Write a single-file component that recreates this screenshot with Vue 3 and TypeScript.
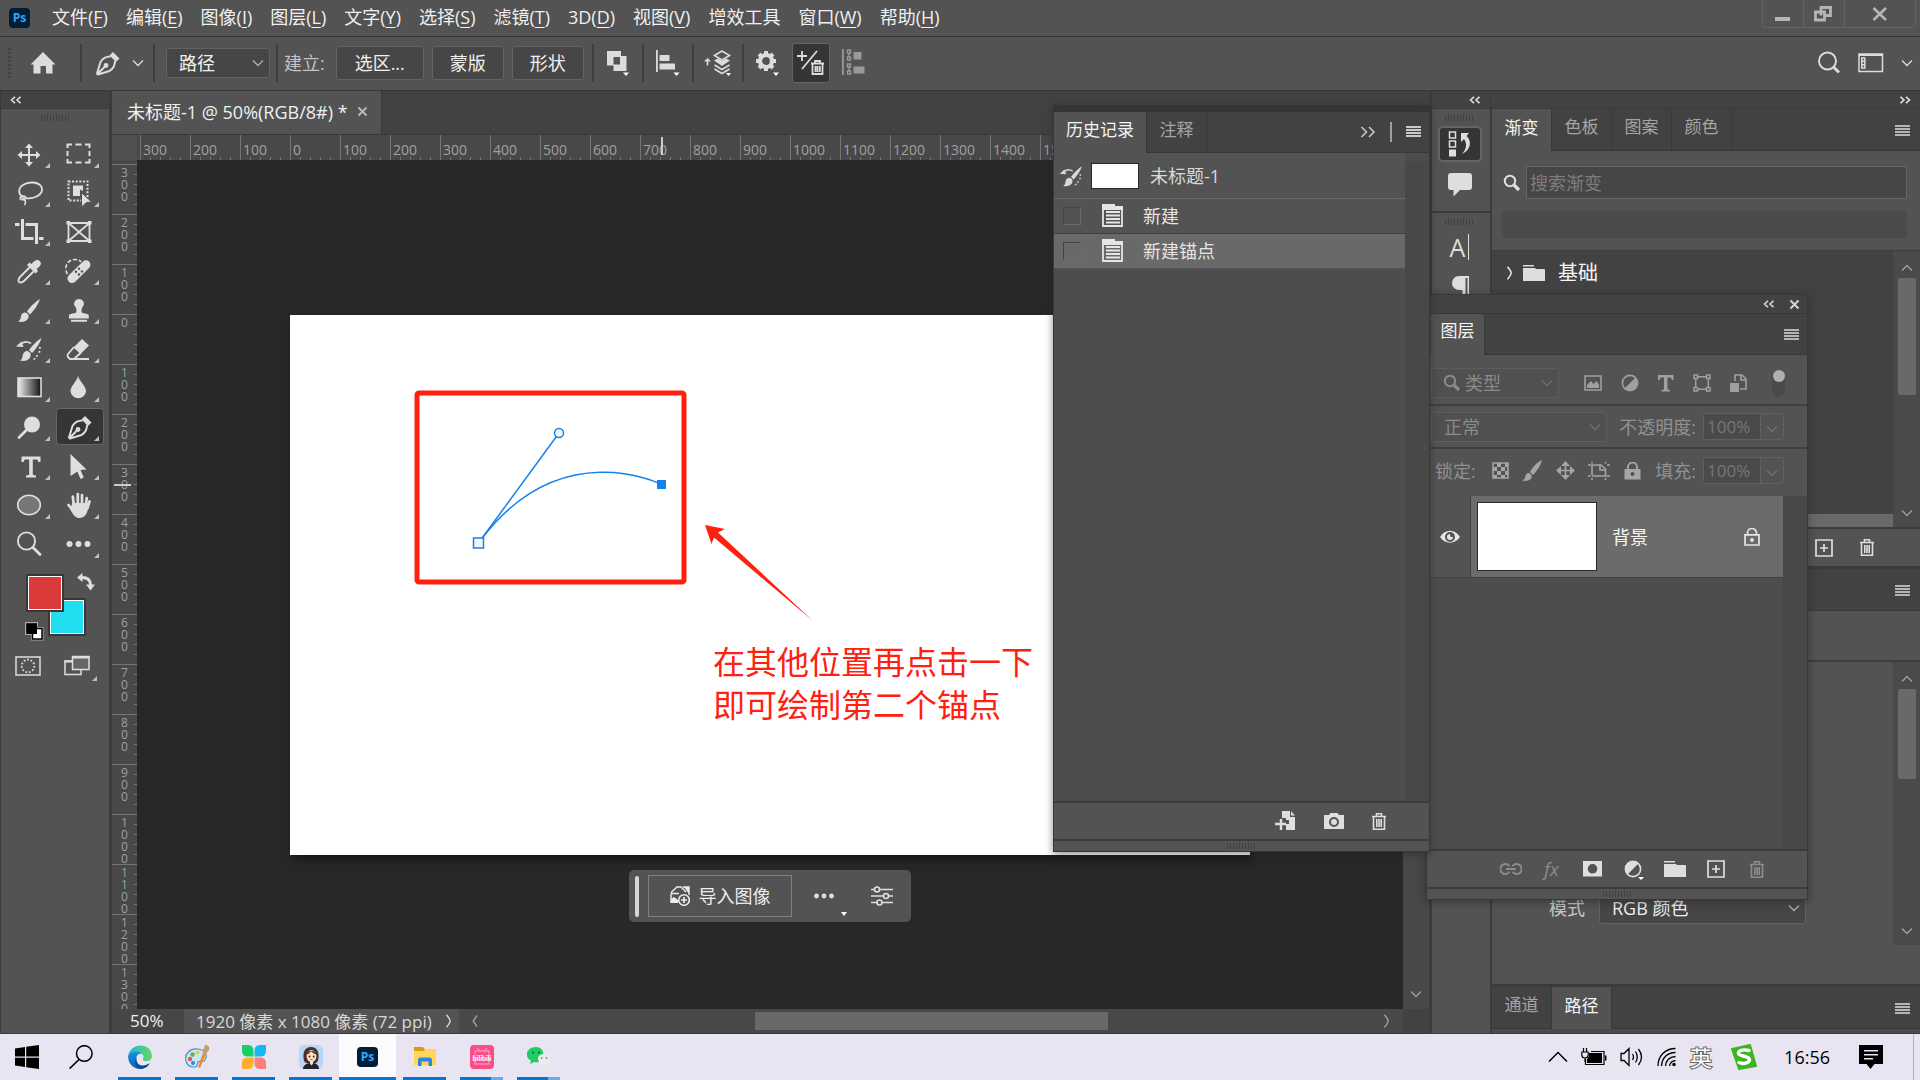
<script setup lang="ts">
import { h, ref } from 'vue'
import type { FunctionalComponent } from 'vue'

type IconDef = [number, number, string]

const S = 'fill="none" stroke="currentColor"'

const trash = `<path ${S} stroke-width="1.6" d="M1 4.5H15M5.5 4V1.8H10.500V4M2.500 5V17.200H13.500V5M5.800 7V15M8 7V15M10.200 7V15"/>`
const brushBody =
  '<path d="M26 4C22 6 16 12 13 16.500L16 19.500C20 15.500 24.500 9 26 4ZM11.500 17.500C8 17.500 7 20 6.800 22.500 6.500 24.500 5.500 25.500 4 26.500 8 27.500 12 26.500 13.800 24 15 22 15 20.500 14 19Z"/>'
const penBody = `<path ${S} stroke-width="2" stroke-linejoin="round" d="M19.500 8.500C15 8.500 11.500 10.500 9.500 14L6 25.500 7 26.500 18.500 23C22 21 24 17.500 24 13M6.500 26L14 18.500"/><circle cx="15" cy="17.500" r="2.400"/><path d="M18.500 7.500L22 4 28.500 10.500 25 14Z"/>`

const icons: Record<string, IconDef> = {
  move: [30, 30, `<path ${S} stroke-width="2" d="M15 7V25M6 16H24"/><path d="M15 4.500L19 9H11ZM15 27.500L19 23H11ZM3.500 16L8 12V20ZM26.500 16L22 12V20Z"/>`],
  marquee: [30, 30, `<path ${S} stroke-width="2" d="M4.500 9V5.500H9M12.500 5.500H18.500M22 5.500H26.500V9M26.500 12V17M26.500 20V23.500H22M18.500 23.500H12.500M9 23.500H4.500V20M4.500 17V12"/>`],
  lasso: [30, 30, `<path ${S} stroke-width="1.8" d="M8.500 18.500C4 16 4 10 9 7 14 3.500 23 3.500 27 8 30 13 26 18 20 19.500 17 20.400 13 20.500 10.500 19.800"/><path ${S} stroke-width="1.6" d="M12 19.500C11 17.500 6.500 17.800 6 20 6 22.500 11 22.500 12 19.500ZM7 19C10 20 13 23.500 10.500 27"/>`],
  object: [30, 30, `<path ${S} stroke-width="2" stroke-dasharray="2 1.6" d="M5.500 3.500H24.500V22.500H5.500Z"/><path d="M10 7.500H20V13L17 11.500V18H10Z"/><path stroke="#535353" d="M18.500 14.500L28.500 24 23.500 24.500 18.500 29Z"/>`],
  crop: [30, 30, `<path ${S} stroke-width="3" d="M8.500 2V21.500H19.500M1 7.500H5.500M11.500 7.500H22.500V27M25 21.500H29.500"/>`],
  frame: [30, 30, `<path ${S} stroke-width="1.800" d="M5.500 6H26.500V24H5.500ZM5.500 6L26.500 24M26.500 6L5.500 24"/><path d="M3.500 4H7V7.500H3.500ZM25 4H28.500V7.500H25ZM3.500 22.500H7V26H3.500ZM25 22.500H28.500V26H25Z"/>`],
  eyedropper: [30, 30, `<path d="M25.800 5C28 7.500 27 10 22.500 13L24 15 21.500 17.500 13 9 15.500 6.500 17.500 8C20 4.500 23 2.500 25.800 5Z"/><path ${S} stroke-width="1.900" d="M15.500 11.500L6.500 20.500C4.500 22.500 4 25 5 26 6.500 27 9 26 10.500 24.500L19.500 15.500"/>`],
  heal: [30, 30, `<path ${S} stroke-width="1.600" stroke-dasharray="4 2" d="M4.500 18C0 11 5 3.500 12 3.500 15 3.500 17 4.500 18 6"/><path d="M20 5.500C22 3.500 25 4 26.500 6 28 8 27.500 10.500 26 12L12.500 25.500C10 27.500 7.500 27.500 5.800 25.500 4 23.500 4 21 6 19Z"/><g fill="#535353"><circle cx="16" cy="12.800" r="1.200"/><circle cx="13" cy="15.800" r="1.200"/><circle cx="19" cy="15.500" r="1.200"/><circle cx="16" cy="18.500" r="1.200"/></g>`],
  brush: [30, 30, brushBody],
  stamp: [30, 30, '<path d="M16 4A4.700 4.700 0 0 1 19.500 12C18.500 13.500 18.300 16 18.800 17.500 21 19 25.800 18.500 25.800 20.500V23.500H6V20.500C6 18.500 11 19 13.200 17.500 13.700 16 13.500 13.500 12.500 12A4.700 4.700 0 0 1 16 4ZM8 24.700H24V26.700H8Z"/>'],
  historybrush: [30, 30, `<path d="M27.500 4C23.500 6 18 12 15 16L18 19C22 15 26 9 27.500 4ZM13.500 17C10 17 9 19.500 8.500 22.500 8.200 24.500 7.500 25.500 6 26.500 10 27.500 14 26.500 15.800 24 17 22 17 20 16 18.500ZM2 12.500L7.500 7.500 9.500 13Z"/><path ${S} stroke-width="1.600" d="M7 10C10 7.500 14 7.500 17 9.500"/><path d="M25 13H26.800V14.800H25ZM24.500 17H26.300V18.800H24.500ZM22 21H23.800V22.800H22ZM19.500 24H21.300V25.800H19.500Z"/>`],
  eraser: [30, 30, `<path ${S} stroke-width="1.800" stroke-linejoin="round" d="M11 13L5 20C4.200 21 4.300 22 5 23L7 25H11L18 18.500M7 25H26"/><path d="M10.500 13.500L19 5 26 11.500 17.500 20Z"/>`],
  gradient: [30, 30, '<defs><linearGradient id="toolGrad"><stop offset="0" stop-color="#eee"/><stop offset="1" stop-color="#111"/></linearGradient></defs><rect x="4" y="5" width="23" height="18.500" fill="url(#toolGrad)" stroke="#ddd" stroke-width="1.600"/>'],
  drop: [30, 30, '<path d="M15 3C17 9 23 13 23 18.500A7.800 7.500 0 0 1 7.500 18.500C7.500 13 13.500 9 15 3Z"/>'],
  dodge: [30, 30, `<circle cx="18" cy="12.500" r="8"/><path ${S} stroke-width="2.800" stroke-linecap="round" d="M12 18.500L5 25.500"/>`],
  pen: [30, 30, penBody],
  type: [30, 30, '<path d="M7.500 5.500H26.500V11H24.300C24 9 23.500 8.500 22 8.500H18.800V23C18.800 24 19.500 24.300 22 24.500V26.500H12V24.500C14.500 24.300 15.200 24 15.200 23V8.500H12C10.500 8.500 10 9 9.700 11H7.500Z"/>'],
  select: [30, 30, '<path d="M7.500 3L23.500 18.500 17.500 19 20.800 26.500 17.500 28 14.300 20.500 7.500 25Z"/>'],
  ellipse: [30, 30, '<ellipse cx="15" cy="15" rx="11.300" ry="9.700" fill="#777" stroke="#e0e0e0" stroke-width="1.600"/>'],
  hand: [30, 30, `<path ${S} stroke-width="2.700" stroke-linecap="round" d="M10.800 15L9.800 6.500M14.800 14V4M19 14V5M22.800 16L23.800 8M5.500 15L10 20.500M26.500 11.500L24.500 18"/><path d="M9.500 13H24.500L25 18C24.500 24 21 28 16.500 28 12.500 28 10.500 25.500 7 19Z"/>`],
  zoom: [30, 30, `<circle cx="12.500" cy="12" r="8.600" ${S} stroke-width="1.900"/><path ${S} stroke-width="2.800" stroke-linecap="round" d="M19 18.500L26 25.500"/>`],
  more: [30, 30, '<circle cx="6.500" cy="15" r="3"/><circle cx="15.500" cy="15" r="3"/><circle cx="24.500" cy="15" r="3"/>'],
  home: [26, 24, '<path d="M13 1L25.500 13.500H22.500V22.500H16V15H10.500V22.500H3.500V13.500H.5Z"/>'],
  chevron: [12, 8, `<path ${S} stroke-width="1.300" d="M1 1.500L6 6.500 11 1.500"/>`],
  chevup: [12, 8, `<path ${S} stroke-width="1.300" d="M1 6.500L6 1.500 11 6.500"/>`],
  right: [8, 14, `<path ${S} stroke-width="1.400" d="M1.500 .8Q5 5 5.200 7 5 9 1.500 13.200"/>`],
  left: [8, 14, `<path ${S} stroke-width="1.400" d="M6 1.500L2.200 7 6 12.500"/>`],
  dblleft: [12, 8, `<path ${S} stroke-width="1.600" d="M5 .8L1.500 4 5 7.200M10.500 .8L7 4 10.500 7.200"/>`],
  dblright: [12, 8, `<path ${S} stroke-width="1.600" d="M1.500 .8L5 4 1.500 7.200M7 .8L10.500 4 7 7.200"/>`],
  dblbig: [16, 12, `<path ${S} stroke-width="1.600" d="M1.500 1L6.500 6 1.500 11M9 1L14 6 9 11"/>`],
  menu: [16, 12, '<path d="M0 0H15V2H0ZM0 3H15V5H0ZM0 6H15V8H0ZM0 9H15V11H0Z"/>'],
  combine: [24, 26, '<path fill-rule="evenodd" d="M1 1H15V6H20.500V21H7.500V15.500H1ZM7.500 7V14.500H14V7Z"/><path fill="#fff" d="M17 22.500H23L20 26Z"/>'],
  align: [24, 26, '<path d="M0 0H1.800V22H0ZM3.500 5H13.500V11H3.500ZM3.500 13.500H19V19.500H3.500Z"/><path fill="#fff" d="M17.500 22.500H23.500L20.500 26Z"/>'],
  arrange: [28, 26, `<path ${S} stroke-width="1.600" d="M18 1L25.500 5.500 18 10 10.500 5.500ZM10.500 15L18 19.500 25.500 15M10.500 19L18 23.500 25.500 19M3.500 15.500V10"/><path d="M10 10.500L14 8.500 18 11 22 8.500 26 10.500 18 16ZM0 11.500L3.500 8 7 11.500Z"/><path fill="#fff" d="M22 23H27L24.500 26Z"/>`],
  gear: [24, 26, `<circle cx="10" cy="11" r="6" ${S} stroke-width="4.200"/><path ${S} stroke-width="4" d="M10 1V4M10 18V21M0 11H3M17 11H20M3 4L5 6M17 4L15 6M3 18L5 16M17 18L15 16"/><path fill="#fff" d="M17 22.500H23L20 26Z"/>`],
  autoadd: [28, 26, `<path ${S} stroke-width="1.800" d="M0 6H10M5 1V11M5 19L20 1M14 13.500H27M18 13V11H23V13M15.500 14V24H25.500V14M18.500 16V22M20.500 16V22M22.800 16V22"/>`],
  edges: [24, 28, `<path d="M0 0H1.800V26H0ZM11.500 3H19.500V10.500H11.500ZM11.500 17.500H22.500V24.500H11.500Z"/><path ${S} stroke-width="1.400" d="M5.500 1H8.500V4H5.500ZM5.500 8H8.500V11H5.500ZM5.500 15H8.500V18H5.500ZM5.500 22H8.500V25H5.500ZM7 4V8M7 18V22"/>`],
  find: [24, 24, `<circle cx="10.500" cy="10" r="8.500" ${S} stroke-width="1.900"/><path ${S} stroke-width="3" d="M16.500 16L22 21.500"/>`],
  smallfind: [18, 18, `<circle cx="7" cy="7" r="5.200" ${S} stroke-width="2"/><path ${S} stroke-width="3.200" d="M11 11L16 16"/>`],
  workspace: [26, 20, `<path ${S} stroke-width="1.500" d="M1 1H24.500V18.500H1ZM3.800 5H6.800V15H3.800ZM3.800 8.300H6.800M3.800 11.700H6.800"/><path d="M1 1H24.500V3H1Z"/>`],
  minimize: [16, 16, '<path d="M0 11H15V15H0Z"/>'],
  restore: [20, 16, `<path ${S} stroke-width="2.800" d="M7 9.500V1.500H16.500V9.500H11M1.500 6H10.500V14H1.500Z"/>`],
  close: [16, 14, `<path ${S} stroke-width="2.600" d="M1.500 1L14 13M14 1L1.500 13"/>`],
  smallclose: [11, 11, `<path ${S} stroke-width="2" d="M1.500 1.500L9.500 9.500M9.500 1.500L1.500 9.500"/>`],
  historydock: [24, 28, `<path ${S} stroke-width="1.500" d="M1.500 2H7.500V8H1.500ZM1.500 11H7.500V17H1.500Z"/><path d="M1 19.500H8V26.500H1ZM13 3H21L18.500 6C24 11 23 20 14 24 19 19 19 13 16 9L13 12Z"/>`],
  comment: [24, 24, '<path d="M3 0H21Q24 0 24 3V14Q24 17 21 17H12L5.500 23.500V17H3Q0 17 0 14V3Q0 0 3 0Z"/>'],
  para: [18, 24, '<path d="M8 0H18V24H16.500V2H14.500V24H11.500V14H8A7 7 0 0 1 8 0Z"/>'],
  folder: [22, 18, '<path d="M0 1H11V2.500H0ZM0 4H12L13 5H21Q22 5 22 6V17H0Z"/>'],
  plus: [18, 18, `<path ${S} stroke-width="1.700" d="M1 1H17V17H1ZM9 5V13M5 9H13"/>`],
  trash: [16, 19, trash],
  docstate: [22, 24, `<path ${S} stroke-width="1.800" d="M1 3H20V22H1ZM4 8H18M4 11.500H18M4 15H18M4 18.500H18"/><path d="M0 0H13V2H21V6H0Z"/>`],
  newdoc: [22, 22, `<path d="M7 4V1H15V7H20V20H11V14H14V10H11V8H7ZM16 1L20 5.500H16Z"/><path ${S} stroke-width="2.400" d="M0 14H11M6 9V20"/>`],
  camera: [20, 18, '<path fill-rule="evenodd" d="M0 3H5L6.500 1H13.500L15 3H20V17H0ZM10 5A5 5 0 0 0 10 15 5 5 0 0 0 10 5ZM10 7A3 3 0 0 1 10 13 3 3 0 0 1 10 7Z"/>'],
  picture: [18, 16, `<path ${S} stroke-width="1.600" d="M1 1H17V15H1Z"/><path d="M3 13V10L7 6 9.500 9 12.500 6 15 10V13Z"/>`],
  adjust: [18, 18, `<circle cx="9" cy="9" r="7.600" ${S} stroke-width="1.600"/><path d="M14.500 3.500L3.500 14.500A7.800 7.800 0 0 0 14.500 3.500Z"/>`],
  adjustfull: [20, 22, '<circle cx="9" cy="11" r="7.600" fill="none" stroke="currentColor" stroke-width="1.600"/><path d="M14.500 5.500L3.500 16.500A7.800 7.800 0 0 1 3.500 5.500 7.800 7.800 0 0 1 14.500 5.500Z"/><path fill="#fff" d="M14 19H20L17 22Z"/>'],
  smallT: [16, 17, '<path d="M0 0H15.500V5H13.800C13.500 3 13 2.600 11.500 2.600H9.500V13.500C9.500 14.500 10 14.800 12 15V16.500H3.500V15C5.500 14.800 6 14.500 6 13.500V2.600H4C2.500 2.600 2 3 1.700 5H0Z"/>'],
  shape: [18, 18, `<path ${S} stroke-width="1.500" d="M1 1H4.500V4.500H1ZM13.500 1H17V4.500H13.500ZM1 13.500H4.500V17H1ZM13.500 13.500H17V17H13.500ZM4.500 2.700H13.500M4.500 15.300H13.500M2.700 4.500V13.500M15.300 4.500V13.500"/>`],
  smart: [17, 18, `<path ${S} stroke-width="1.600" d="M5 7V1H12L16 5V15H10M11 1V6H16"/><path d="M0 9H9V18H0Z"/>`],
  checker: [17, 17, `<path ${S} stroke-width="1.600" d="M1 1H16V16H1Z"/><path d="M5 1H9V5H5ZM13 1H16V5H13ZM1 5H5V9H1ZM9 5H13V9H9ZM5 9H9V13H5ZM13 9H16V13H13ZM1 13H5V16H1ZM9 13H13V16H9Z"/>`],
  smallbrush: [20, 21, '<path d="M20 0C15 2 10 8 8 12L11 15C15 11 19 5 20 0ZM7 13C4 13 3.500 15.500 3 17.500 2.500 19 1.500 20 0 20.500 4 21.500 8 20.500 9.500 18 10.200 16.500 10 15 7 13Z"/>'],
  smallmove: [19, 19, `<path ${S} stroke-width="1.700" d="M9.500 2V17M2 9.500H17"/><path d="M9.500 0L14 5H5ZM9.500 19L14 14H5ZM0 9.500L5 5V14ZM19 9.500L14 5V14Z"/>`],
  artboard: [22, 18, `<path ${S} stroke-width="1.600" d="M0 3H3M4 13V3H13L17.500 7V14H4M18.500 14H22M4 16V18M17.500 16V18M4 0V1.500M17.500 0V1.500M19 3H22M0 14H3M12 3V8H17"/>`],
  lockfull: [17, 18, `<path ${S} stroke-width="1.900" d="M4 7V5A4.500 4.500 0 0 1 13 5V7"/><path fill-rule="evenodd" d="M.5 7H16.500V17.500H.5ZM8.500 10A2 2 0 0 0 8.500 14 2 2 0 0 0 8.500 10Z"/>`],
  lock: [16, 18, `<path ${S} stroke-width="1.700" d="M3.500 6.500V5A4.500 4.500 0 0 1 12.500 5V6.500M1 6.800H15V17H1Z"/><circle cx="8" cy="12" r="1.900"/>`],
  eye: [20, 14, '<path fill-rule="evenodd" d="M0 7C5-1.500 15-1.500 20 7 15 14.500 5 14.500 0 7ZM10 2A5 5 0 0 0 10 12 5 5 0 0 0 10 2Z"/><path d="M10 4A3 3 0 0 0 10 10 3 3 0 0 0 13 7L10.500 7Z"/>'],
  link: [22, 14, `<path ${S} stroke-width="2" d="M9.500 4.200A5 5 0 1 0 9.500 9.800M12.500 4.200A5 5 0 1 1 12.500 9.800M6 7H16"/>`],
  mask: [20, 16, '<path fill-rule="evenodd" d="M0 0H19V15.500H0ZM9.500 3A4.800 4.800 0 0 0 9.500 12.600 4.800 4.800 0 0 0 9.500 3Z"/>'],
  swap: [18, 18, `<path ${S} stroke-width="2.800" d="M5 4.500C11 4.500 13.500 7 13.500 12"/><path d="M0 4.500L5.500 0V9ZM13.500 17.500L9 11.500H18Z"/>`],
  defaults: [19, 19, '<path fill="#aaa" d="M0 0H13V5H18.500V18.500H6V13H0Z"/><path d="M7.500 6.500H17V17H7.500Z" fill="#fff" stroke="#000" stroke-width="1.500"/><path fill="#000" d="M1.200 1.200H12V12H1.200Z"/>'],
  quickmask: [26, 20, `<path ${S} stroke-width="1.500" d="M1 1H25V19H1Z"/><circle cx="13" cy="10" r="6.300" ${S} stroke-width="1.800" stroke-dasharray="1.700 1.800"/>`],
  screen: [28, 22, `<path ${S} stroke-width="1.500" d="M9 6H2V19.500H18V15"/><path d="M1.500 5.500H9V7.500H1.500Z"/><path fill="#666" stroke="currentColor" stroke-width="1.500" d="M9.500 1.500H26V14.500H9.500Z"/><path d="M9 1H26.500V3.500H9Z"/>`],
  importimg: [20, 20, `<path ${S} stroke-width="1.400" d="M1 6.500L7 1H11L16 6M13 1H19V9M1 7.500H9M1 7.500V17"/><path d="M1 17V13L4 11 8 14V17ZM14 1H19V8Z"/><circle cx="14" cy="14" r="5.300" fill="#535353" stroke="currentColor" stroke-width="1.600"/><path ${S} stroke-width="1.700" d="M11 14H17M14 11V17"/>`],
  dots: [20, 6, '<circle cx="2.500" cy="3" r="2.400"/><circle cx="10" cy="3" r="2.400"/><circle cx="17.500" cy="3" r="2.400"/>'],
  sliders: [22, 22, `<path ${S} stroke-width="1.500" d="M0 4.500H3.500M8.500 4.500H22M0 11H12.500M17.500 11H22M0 17.500H6M11 17.500H22"/><g ${S} stroke-width="1.600"><circle cx="6" cy="4.500" r="2.500"/><circle cx="15" cy="11" r="2.500"/><circle cx="8.500" cy="17.500" r="2.500"/></g>`],
  windows: [24, 24, '<path d="M0 3.500L10 2V11.500H0ZM11.200 1.800L24 0V11.500H11.200ZM0 12.700H10V22L0 20.500ZM11.200 12.700H24V24L11.200 22.200Z"/>'],
  tasksearch: [24, 24, `<circle cx="15.300" cy="8.500" r="7.800" ${S} stroke-width="1.500"/><path ${S} stroke-width="1.700" d="M10 14.500L.6 23.500"/>`],
  edge: [24, 24, '<defs><linearGradient id="eg1" x1="0" x2="1"><stop offset="0" stop-color="#27b4e8"/><stop offset="1" stop-color="#62d95a"/></linearGradient><linearGradient id="eg2" x1="0" y1="0" x2="0" y2="1"><stop offset="0" stop-color="#1597d8"/><stop offset="1" stop-color="#0a5fb5"/></linearGradient></defs><path fill="url(#eg1)" d="M.2 11C1.500-2 23-4 24 11 24 16 19 17 15.500 15.500 14 14 16 13.500 15.500 11 14 7 5 5 .2 11Z"/><path fill="url(#eg2)" d="M.2 11C2 6 10 5 14 9 9 8 7 13 9 17 11 22 17 22 21 19 18 24 12 25 7.500 23 2 20 0 16 .2 11Z"/><path fill="#124f91" d="M9 12C6 19 14 23.500 22 18 19 24 12 25.500 8.500 21.500 6.500 18.500 7 14 9 12Z"/>'],
  paint: [26, 24, '<path fill="#c9e6f7" stroke="#4c93c4" stroke-width="1.200" d="M2 16C0 9 6 3 14 4 21 5 24 10 21 15 19 18 16 15 14 17 12 20 15 22 10 22 6 22 3 20 2 16Z"/><circle cx="6" cy="14" r="2.200" fill="#e35b4f"/><circle cx="8.500" cy="9.500" r="2.200" fill="#6ab04c"/><circle cx="13.500" cy="7.500" r="2.100" fill="#f5c542"/><circle cx="9" cy="18" r="2" fill="#3d7fd0"/><path fill="#f08a24" d="M19 8L22 9 16 23 14 22Z"/><path fill="#c89c6c" d="M19 8C18 4 20 4 21 0 25 0 26 3 25 5L22 9Z"/>'],
  clover: [24, 24, '<path fill="#18cf67" d="M0 0H6Q11.500 0 11.500 6V11.500H6Q0 11.500 0 6Z"/><path fill="#19b6f4" d="M24 0V6Q24 11.500 18 11.500H12.500V6Q12.500 0 18 0Z"/><path fill="#ffad2e" d="M0 24V18Q0 12.500 6 12.500H11.500V18Q11.500 24 6 24Z"/><path fill="#ff7f7a" d="M24 24H18Q12.500 24 12.500 18V12.500H18Q24 12.500 24 18Z"/>'],
  avatar: [24, 24, '<rect width="24" height="24" rx="5" fill="#b5d8f7"/><path fill="#4a3028" d="M5 16C3 7 6 2 12 2 18 2 21 7 19 16L17 18H7Z"/><ellipse cx="12.500" cy="11" rx="5" ry="6" fill="#fbdcca"/><path fill="#4a3028" d="M7 10C8 5 16 4 18 10 15 9 13 7 12 6 11 8 9 9 7 10Z"/><path fill="#1f2128" d="M4 24C4 20 8 18.500 10.500 18L12.500 20 14.500 18C17 18.500 20 20 20 24Z"/><path fill="#fbdcca" d="M11 16H14V18.500L12.500 20.500 11 18.500Z"/><circle cx="10.500" cy="11.500" r=".9" fill="#222"/><circle cx="14.700" cy="11.500" r=".9" fill="#222"/><path stroke="#d05050" d="M11.500 14.500H13.500"/>'],
  explorer: [22, 20, '<path fill="#dc9a12" d="M0 0H9L11 2.500V6H0Z"/><path fill="#ffd55c" d="M0 4H10L11.500 2H22V18H0Z"/><path fill="#2f86d8" d="M4 19V13Q4 10.500 6.500 10.500H15.500Q18 10.500 18 13V19H14.500V14.500H7.500V19Z"/>'],
  bilibili: [24, 24, '<rect width="24" height="24" rx="4" fill="#fb4c86"/><path fill="none" stroke="#ff8fb4" stroke-width="1.500" d="M7 3L10 6M17 3L14 6M5 6H19V19H5Z"/><text x="12" y="16" text-anchor="middle" font-family="Lato, sans-serif" font-weight="900" font-size="7" fill="#fff">bilibili</text>'],
  wechat: [24, 22, '<path fill="#1fcb63" d="M9 1C-1 1-3 11 4 14.500L3 18 7 16C9 16.500 11 16.400 12 16 19 14 18 1 9 1Z"/><path fill="#ececec" d="M17 8C10 8 9 15 14 17.500 16 18.500 18 18.500 19.500 18L22.500 19.500 22 17C26 13 23 8 17 8Z"/><g fill="#0b6c34"><circle cx="6" cy="6.500" r="1.100"/><circle cx="12" cy="6.500" r="1.100"/></g><g fill="#888"><circle cx="14.700" cy="12" r=".9"/><circle cx="19.500" cy="12" r=".9"/></g>'],
  trayup: [20, 12, `<path ${S} stroke-width="1.500" d="M1 10.500L10 1.500 19 10.500"/>`],
  battery: [26, 18, `<path d="M8 5H21V15H6V11Q8 10 8 5ZM24 7.500H25.500V12.500H24Z"/><path ${S} stroke-width="1.200" d="M10 3.500H23V16.500H4.500V11M2.500 0V4M5.500 0V4M.8 4H7.200V7Q7 10 4 10 1 10 .8 7ZM4 10V14"/>`],
  speaker: [24, 20, `<path ${S} stroke-width="1.300" d="M1 6.500H4L9 1.500V18.500L4 13.500H1ZM12.500 7Q14.500 10 12.500 13M15.500 4.500Q19 10 15.500 15.500M18.500 2Q24.500 10 18.500 18"/>`],
  wifi: [20, 20, `<path ${S} stroke-width="1.300" d="M1 19C1 9 8 1.500 18.500 1.500M4.500 19C5 11 10 5.500 18.500 5.500M8.500 19C9 13.500 12 10 18.500 9.500M12.500 19C13 16 14.500 14 18.500 13.500"/><circle cx="17" cy="17.500" r="1.700"/>`],
  sogou: [26, 26, '<path fill="#3cb51f" d="M1 5L19 1 25 22 8 25Z" stroke="#3cb51f" stroke-width="2" stroke-linejoin="round"/><path fill="none" stroke="#fff" stroke-width="3.400" stroke-linecap="round" d="M18 6.500C12 5 7 6.500 7.500 9.500 8 12.500 18 11.500 18.500 15.500 18.500 19 12 20.500 8 18.500"/>'],
  notify: [24, 24, '<path fill-rule="evenodd" d="M0 0H24V19H15.500L11.500 24 7.500 19H0ZM5 5V6.400H19V5ZM5 9V10.400H19V9ZM5 13V14.400H14V13Z"/>'],
}

const Icon: FunctionalComponent<{ name: string }> = (props) => {
  const [w, ht, body] = icons[props.name]
  return h('svg', { width: w, height: ht, viewBox: `0 0 ${w} ${ht}`, fill: 'currentColor', 'aria-hidden': 'true', innerHTML: body })
}
Icon.props = ['name']

const menus: [string, string][] = [
  ['文件', 'F'], ['编辑', 'E'], ['图像', 'I'], ['图层', 'L'], ['文字', 'Y'], ['选择', 'S'],
  ['滤镜', 'T'], ['3D', 'D'], ['视图', 'V'], ['增效工具', ''], ['窗口', 'W'], ['帮助', 'H'],
]
const tools = [
  'move', 'marquee', 'lasso', 'object', 'crop', 'frame', 'eyedropper', 'heal', 'brush', 'stamp',
  'historybrush', 'eraser', 'gradient', 'drop', 'dodge', 'pen', 'type', 'select', 'ellipse', 'hand', 'zoom', 'more',
]
const noFlyout = ['frame', 'zoom']
const activeTool = ref('pen')

const hRuler = Array.from({ length: 26 }, (_, i) => Math.abs(i * 100 - 300))
const vRuler = Array.from({ length: 17 }, (_, i) => String(Math.abs(i * 100 - 300)).split(''))

const states = ['新建', '新建锚点']
const currentState = ref(1)
const swatchTabs = ['渐变', '色板', '图案', '颜色']
const filters = ['picture', 'adjust', 'smallT', 'shape', 'smart']
const locks = ['checker', 'smallbrush', 'smallmove', 'artboard', 'lockfull']

const apps: { icon: string; more?: boolean }[] = [
  { icon: 'edge' }, { icon: 'paint' }, { icon: 'clover' }, { icon: 'avatar' }, { icon: 'ps' },
  { icon: 'explorer' }, { icon: 'bilibili', more: true }, { icon: 'wechat', more: true },
]
</script>

<template>
  <div class="app">
    <header class="titlebar">
      <span class="ps-logo">Ps</span>
      <nav class="menus">
        <button v-for="[label, key] in menus" :key="label" class="menu">{{ label }}<template v-if="key">(<u>{{ key }}</u>)</template></button>
      </nav>
      <div class="window-buttons">
        <button aria-label="最小化"><Icon name="minimize" /></button>
        <button aria-label="还原"><Icon name="restore" /></button>
        <button class="wide" aria-label="关闭"><Icon name="close" /></button>
      </div>
    </header>

    <div class="options">
      <i class="vgrip"></i>
      <button class="home" aria-label="主页"><Icon name="home" /></button>
      <i class="sep"></i>
      <button class="tool-preset" aria-label="钢笔工具"><Icon name="pen" /><Icon name="chevron" /></button>
      <i class="sep"></i>
      <span class="dropdown mode-pick">
        <select aria-label="工具模式"><option>路径</option></select><Icon name="chevron" />
      </span>
      <i class="sep"></i>
      <span class="make">建立:</span>
      <button class="push wide">选区...</button>
      <button class="push">蒙版</button>
      <button class="push">形状</button>
      <i class="sep"></i>
      <button class="opt" aria-label="路径操作"><Icon name="combine" /></button>
      <i class="sep"></i>
      <button class="opt" aria-label="路径对齐方式"><Icon name="align" /></button>
      <i class="sep"></i>
      <button class="opt" aria-label="路径排列方式"><Icon name="arrange" /></button>
      <i class="sep"></i>
      <button class="opt" aria-label="其他选项"><Icon name="gear" /></button>
      <button class="opt pressed" aria-label="自动添加/删除"><Icon name="autoadd" /></button>
      <button class="opt off" aria-label="对齐边缘"><Icon name="edges" /></button>
      <div class="options-end">
        <button aria-label="搜索"><Icon name="find" /></button>
        <button aria-label="工作区"><Icon name="workspace" /></button>
        <button aria-label="选择工作区"><Icon name="chevron" /></button>
      </div>
    </div>

    <main class="workspace">
      <aside class="toolbar">
        <div class="dock-head"><Icon name="dblleft" /></div>
        <div class="toolbar-body">
          <i class="grip"></i>
          <div class="tools">
            <button v-for="t in tools" :key="t" class="tool" :class="{ active: t === activeTool, fly: !noFlyout.includes(t) }" :aria-label="t" @click="activeTool = t"><Icon :name="t" /></button>
          </div>
          <div class="swatches">
            <button class="swatch back" aria-label="背景色"></button>
            <button class="swatch front" aria-label="前景色"></button>
            <button class="swap" aria-label="切换颜色"><Icon name="swap" /></button>
            <button class="defaults" aria-label="默认颜色"><Icon name="defaults" /></button>
          </div>
          <div class="modes">
            <button aria-label="快速蒙版"><Icon name="quickmask" /></button>
            <button class="fly" aria-label="屏幕模式"><Icon name="screen" /></button>
          </div>
        </div>
      </aside>

      <section class="document">
        <div class="doc-tabs">
          <div class="doc-tab">未标题-1 @ 50%(RGB/8#) *<button aria-label="关闭文档"><Icon name="smallclose" /></button></div>
        </div>
        <div class="hruler-row">
          <div class="ruler-corner"></div>
          <div class="hruler">
            <span v-for="(n, i) in hRuler" :key="i">{{ n }}</span>
            <i class="hmark"></i>
          </div>
        </div>
        <div class="doc-body">
          <div class="vruler">
            <div v-for="(n, i) in vRuler" :key="i" class="vcell"><span v-for="(d, j) in n" :key="j">{{ d }}</span></div>
            <i class="vmark"></i>
          </div>
          <div class="stage">
            <div class="page">
              <svg class="drawing" width="960" height="540" viewBox="0 0 960 540">
                <rect x="127" y="78" width="267" height="189" rx="2" fill="none" stroke="#ff2010" stroke-width="5" />
                <path d="M415 210L435 214 428 217.500 523 306 424 222.500 421.500 229Z" fill="#ff2010" />
                <g fill="none" stroke="#1482ee" stroke-width="1.500">
                  <path d="M188.500 228L269 118" />
                  <path d="M188.500 228C269 118 371 169 371.500 169.500" />
                  <circle cx="269" cy="118" r="4.500" fill="#f6f6f6" />
                  <path d="M183.500 223H193.500V233H183.500Z" fill="#f6f6f6" />
                </g>
                <path d="M367 165H376V174H367Z" fill="#1482ee" />
              </svg>
              <p class="note">在其他位置再点击一下<br />即可绘制第二个锚点</p>
            </div>
            <div class="context-bar">
              <i class="handle"></i>
              <button class="import"><Icon name="importimg" />导入图像</button>
              <button class="ctx-more" aria-label="更多"><Icon name="dots" /></button>
              <button aria-label="属性"><Icon name="sliders" /></button>
            </div>
          </div>
          <div class="vscroll"><Icon name="chevron" /></div>
        </div>
        <footer class="status">
          <span class="zoom-level">50%</span>
          <span class="doc-info">1920 像素 x 1080 像素 (72 ppi)<Icon name="right" /></span>
          <div class="hscroll"><Icon name="left" /><i class="hthumb"></i><Icon name="right" /></div>
        </footer>
      </section>

      <aside class="icon-dock">
        <div class="dock-head end"><Icon name="dblleft" /></div>
        <div class="icon-group">
          <i class="grip"></i>
          <button class="pressed" aria-label="历史记录"><Icon name="historydock" /></button>
          <button aria-label="注释"><Icon name="comment" /></button>
        </div>
        <div class="icon-group last">
          <i class="grip"></i>
          <button class="char" aria-label="字符">A<i></i></button>
          <button aria-label="段落"><Icon name="para" /></button>
        </div>
      </aside>

      <aside class="panels">
        <div class="dock-head end"><Icon name="dblright" /></div>
        <section class="gradients">
          <div class="tabs">
            <button v-for="(t, i) in swatchTabs" :key="t" class="tab" :class="{ on: i === 0 }">{{ t }}</button>
            <button class="panel-menu" aria-label="面板菜单"><Icon name="menu" /></button>
          </div>
          <label class="search"><Icon name="smallfind" /><input type="text" placeholder="搜索渐变" /></label>
          <div class="recent"></div>
          <div class="preset-area">
            <div class="preset-list">
              <button class="preset-folder"><Icon name="right" /><Icon name="folder" />基础</button>
            </div>
            <div class="track"><Icon name="chevup" /><i class="thumb"></i><Icon name="chevron" /></div>
          </div>
          <div class="panel-foot">
            <button aria-label="新建渐变"><Icon name="plus" /></button>
            <button aria-label="删除渐变"><Icon name="trash" /></button>
          </div>
        </section>
        <section class="properties">
          <div class="tabs"><button class="panel-menu" aria-label="面板菜单"><Icon name="menu" /></button></div>
          <div class="prop-title"></div>
          <div class="prop-area">
            <div class="prop-body">
              <label for="mode">模式</label>
              <span class="dropdown"><select id="mode"><option>RGB 颜色</option></select><Icon name="chevron" /></span>
            </div>
            <div class="track"><Icon name="chevup" /><i class="thumb short"></i><Icon name="chevron" /></div>
          </div>
        </section>
        <section class="bottom-tabs">
          <div class="tabs">
            <button class="tab">通道</button>
            <button class="tab on">路径</button>
            <button class="panel-menu" aria-label="面板菜单"><Icon name="menu" /></button>
          </div>
        </section>
      </aside>

      <section class="floating layers">
        <div class="float-head"><Icon name="dblleft" /><Icon name="smallclose" /></div>
        <div class="tabs">
          <button class="tab on">图层</button>
          <button class="panel-menu" aria-label="面板菜单"><Icon name="menu" /></button>
        </div>
        <div class="layer-row filter-row">
          <span class="dropdown kind"><Icon name="smallfind" /><select aria-label="图层类型" disabled><option>类型</option></select><Icon name="chevron" /></span>
          <div class="filter-icons"><button v-for="f in filters" :key="f" :aria-label="f"><Icon :name="f" /></button></div>
          <button class="toggle" aria-label="过滤开关"><i></i></button>
        </div>
        <div class="layer-row">
          <span class="dropdown blend"><select aria-label="混合模式" disabled><option>正常</option></select><Icon name="chevron" /></span>
          <label class="amount">不透明度:<span class="number"><input value="100%" disabled /><Icon name="chevron" /></span></label>
        </div>
        <div class="layer-row lock-row">
          <span>锁定:</span>
          <div class="lock-icons"><button v-for="l in locks" :key="l" :aria-label="l"><Icon :name="l" /></button></div>
          <label class="amount">填充:<span class="number"><input value="100%" disabled /><Icon name="chevron" /></span></label>
        </div>
        <div class="layer-list">
          <div class="layer-items">
            <div class="layer">
              <button class="eye" aria-label="可见性"><Icon name="eye" /></button>
              <div class="layer-main"><i class="thumbnail"></i><span>背景</span><Icon name="lock" /></div>
            </div>
          </div>
          <div class="side-track"></div>
        </div>
        <div class="panel-foot layer-foot">
          <button class="dim" aria-label="链接"><Icon name="link" /></button>
          <button class="dim fx">fx</button>
          <button aria-label="蒙版"><Icon name="mask" /></button>
          <button aria-label="调整"><Icon name="adjustfull" /></button>
          <button aria-label="新建组"><Icon name="folder" /></button>
          <button aria-label="新建图层"><Icon name="plus" /></button>
          <button class="dim" aria-label="删除图层"><Icon name="trash" /></button>
        </div>
        <div class="resize"><i class="grip"></i></div>
      </section>

      <section class="floating history">
        <div class="tabs">
          <button class="tab on">历史记录</button>
          <button class="tab">注释</button>
          <div class="tabs-end"><Icon name="dblbig" /><i></i><Icon name="menu" /></div>
        </div>
        <div class="history-area">
          <div class="history-list">
            <div class="snapshot"><Icon name="historybrush" /><i class="thumbnail"></i>未标题-1</div>
            <label v-for="(s, i) in states" :key="s" class="state" :class="{ current: i === currentState }">
              <input type="checkbox" /><Icon name="docstate" />{{ s }}
            </label>
          </div>
          <div class="side-track"></div>
        </div>
        <div class="panel-foot history-foot">
          <button aria-label="从当前状态创建新文档"><Icon name="newdoc" /></button>
          <button aria-label="创建新快照"><Icon name="camera" /></button>
          <button aria-label="删除当前状态"><Icon name="trash" /></button>
        </div>
        <div class="resize"><i class="grip"></i></div>
      </section>
    </main>

    <footer class="taskbar">
      <button class="start" aria-label="开始"><Icon name="windows" /></button>
      <button class="start find" aria-label="搜索"><Icon name="tasksearch" /></button>
      <button v-for="a in apps" :key="a.icon" class="task" :class="{ focus: a.icon === 'ps', more: a.more }" :aria-label="a.icon">
        <span v-if="a.icon === 'ps'" class="ps-logo">Ps</span><Icon v-else :name="a.icon" />
      </button>
      <div class="tray">
        <Icon name="trayup" /><Icon name="battery" /><Icon name="speaker" /><Icon name="wifi" />
        <span class="ime">英</span><Icon name="sogou" />
        <time>16:56</time>
        <Icon name="notify" />
      </div>
    </footer>
  </div>
</template>

<style>
body { margin: 0; }
</style>

<style scoped>
* { box-sizing: border-box; }
.app {
  display: flex; flex-direction: column; height: 100vh; overflow: hidden;
  background: #3b3b3b; color: #e0e0e0;
  font: 18px/24px "Open Sans", "Noto Sans CJK SC", sans-serif;
}
svg { display: block; flex: none; }
button { display: flex; align-items: center; justify-content: center; padding: 0; border: 0; background: none; color: inherit; font: inherit; white-space: nowrap; }
input, select { font: inherit; color: inherit; margin: 0; }
i { display: block; font-style: normal; }

.titlebar { display: flex; align-items: flex-start; height: 37px; flex: none; background: #535353; border-bottom: 1px solid #383838; }
.ps-logo { display: flex; align-items: center; justify-content: center; width: 21px; height: 20px; border-radius: 4px; background: #001e36; color: #31a8ff; font: bold 12px/20px "Open Sans", sans-serif; }
.titlebar .ps-logo { margin: 8px 22px 0 9px; }
.menus { display: flex; gap: 18px; padding-top: 5px; color: #f0f0f0; }
.menu u { text-underline-offset: 3px; text-decoration-thickness: 1px; }
.window-buttons { display: flex; height: 28px; margin: 0 4px 0 auto; border: 1px solid #646464; border-top: 0; border-radius: 0 0 4px 4px; color: #b5b5b5; }
.window-buttons button { width: 41px; border-right: 1px solid #646464; }
.window-buttons .wide { width: 70px; border: 0; }

.options { display: flex; align-items: center; flex: none; height: 53px; padding: 0 0 2px 8px; background: #535353; color: #dcdcdc; }
.vgrip { width: 3px; height: 30px; background: repeating-linear-gradient(#424242 0 2px, #535353 2px 4px); }
.sep { width: 2px; height: 38px; background: #3e3e3e; flex: none; }
.home { width: 69px; padding-right: 6px; }
.tool-preset { width: 71px; gap: 11px; }
.dropdown { position: relative; display: flex; align-items: center; height: 30px; background: #464646; border: 1px solid #626262; border-radius: 3px; }
.dropdown select { appearance: none; width: 100%; height: 100%; padding: 0 24px 0 12px; border: 0; background: none; outline: 0; opacity: 1; line-height: 24px; }
.dropdown svg:last-child { position: absolute; right: 5px; color: #b0b0b0; pointer-events: none; }
.mode-pick { width: 104px; margin: 0 6px 0 11px; color: #f0f0f0; }
.make { margin: 0 11px 0 6px; color: #c4c4c4; }
.push { width: 72px; height: 34px; margin-right: 8px; border: 1px solid #626262; border-radius: 3px; background: #464646; color: #f0f0f0; }
.push.wide { width: 88px; }
.opt { width: 48px; height: 40px; }
.opt.pressed { width: 38px; background: #353535; border: 1px solid #646464; border-radius: 3px; }
.opt.off { color: #999; }
.options-end { display: flex; align-items: center; gap: 17px; margin: 0 7px 0 auto; }

.workspace { position: relative; display: flex; flex: 1; min-height: 0; border-top: 1px solid #383838; }
.dock-head { display: flex; align-items: center; flex: none; height: 17px; padding: 0 9px; background: #424242; }
.dock-head.end { justify-content: flex-end; }
.grip { width: 29px; height: 6px; background: repeating-linear-gradient(90deg, #404040 0 1px, transparent 1px 3px); }

.toolbar { display: flex; flex-direction: column; width: 109px; flex: none; padding: 0 0 1px 1px; }
.toolbar-body { flex: 1; margin-top: 1px; background: #535353; display: flex; flex-direction: column; align-items: center; padding-top: 6px; color: #dedede; }
.tools { display: grid; grid-template-columns: 48px 48px; grid-auto-rows: 37px; gap: 2px 1px; margin-top: 14px; }
.tool { position: relative; padding-right: 4px; border: 1px solid transparent; border-radius: 4px; }
.tool.active { background: #353535; border-color: #666; }
.fly::after { content: ""; position: absolute; right: 4px; bottom: 3px; border: solid transparent; border-width: 0 0 5px 5px; border-bottom-color: #c0c0c0; }
.swatches { position: relative; width: 70px; height: 68px; margin: 11px 0 0 9px; }
.swatch { position: absolute; width: 36px; height: 36px; border: 2px solid #fff; outline: 2px solid #383838; outline-offset: -1px; }
.swatch.front { left: 2px; top: 2px; background: #da3a3a; }
.swatch.back { left: 24px; top: 26px; background: #22def0; }
.swap { position: absolute; right: 0; top: 0; }
.defaults { position: absolute; left: 0; bottom: 0; }
.modes { display: flex; gap: 22px; margin-top: 14px; padding-right: 4px; }
.modes .fly { position: relative; }
.modes .fly::after { right: -6px; bottom: -4px; }

.document { display: flex; flex-direction: column; flex: 1; min-width: 0; margin: 0 3px 0 3px; background: #424242; }
.doc-tabs { display: flex; flex: none; height: 44px; border-bottom: 1px solid #383838; }
.doc-tab { display: flex; align-items: center; gap: 9px; padding: 0 13px 2px 15px; background: #535353; border-right: 1px solid #383838; color: #f0f0f0; white-space: nowrap; }
.doc-tab button { color: #b8b8b8; }
.hruler-row { display: flex; height: 25px; flex: none; background: #484848; }
.ruler-corner { width: 25px; flex: none; background: #505050; }
.hruler { position: relative; display: flex; flex: 1; min-width: 0; padding-left: 3px; overflow: hidden; color: #a0a0a0; font-size: 14px; line-height: 29px; }
.hruler span { width: 50px; flex: none; padding-left: 2px; border-left: 1px solid #757575; background: repeating-linear-gradient(90deg, transparent 0 9px, #757575 9px 10px) 0 100% / 49px 3px no-repeat; }
.hmark { position: absolute; left: 524px; top: 2px; width: 2px; height: 18px; background: #ccc; }
.doc-body { display: flex; flex: 1; min-height: 0; }
.vruler { position: relative; display: flex; flex-direction: column; width: 25px; flex: none; padding-top: 4px; overflow: hidden; background: #484848; color: #a0a0a0; font-size: 12px; line-height: 12px; }
.vcell { display: flex; flex-direction: column; height: 50px; flex: none; padding: 2px 0 0 9px; border-top: 1px solid #757575; background: repeating-linear-gradient(transparent 0 9px, #757575 9px 10px) 100% 0 / 3px 49px no-repeat; }
.vmark { position: absolute; left: 2px; top: 324px; width: 17px; height: 2px; background: #ccc; }
.stage { position: relative; flex: 1; min-width: 0; overflow: hidden; background: #282828; }
.page { position: absolute; left: 153px; top: 155px; width: 960px; height: 540px; background: #fff; box-shadow: 2px 5px 8px #161816; }
.drawing { position: absolute; left: 0; top: 0; }
.note { position: absolute; left: 423px; top: 325px; margin: 0; color: #ff2010; font-size: 32px; line-height: 43px; white-space: nowrap; }
.context-bar { position: absolute; left: 492px; top: 710px; display: flex; align-items: center; width: 282px; height: 52px; padding: 0 18px 0 6px; border-radius: 5px; background: #535353; }
.handle { width: 6px; height: 41px; border-radius: 3px; background: #d5d5d5; }
.import { gap: 9px; width: 144px; flex: none; height: 42px; margin-left: 9px; border: 1px solid #808080; color: #ececec; }
.ctx-more { position: relative; margin: 0 37px 0 22px; }
.ctx-more::after { content: ""; position: absolute; right: -13px; top: 19px; border: solid transparent; border-width: 4px 3px 0; border-top-color: #fff; }
.vscroll { display: flex; flex-direction: column; justify-content: flex-end; align-items: center; width: 26px; flex: none; padding-bottom: 11px; background: #484848; color: #a0a0a0; }
.status { display: flex; flex: none; height: 25px; border-bottom: 1px solid #383838; font-size: 17px; line-height: 23px; }
.zoom-level { width: 72px; padding-left: 18px; background: #464646; color: #f0f0f0; }
.doc-info { display: flex; align-items: center; justify-content: space-between; width: 275px; padding: 0 6px 0 12px; background: #535353; color: #d8d8d8; white-space: nowrap; }
.hscroll { display: flex; align-items: center; flex: 1; margin-right: 26px; padding: 0 12px 0 12px; background: #484848; color: #a0a0a0; }
.hthumb { width: 353px; height: 18px; margin: 0 auto 0 276px; background: #696969; }

.icon-dock { display: flex; flex-direction: column; width: 58px; flex: none; margin-right: 2px; padding-bottom: 1px; }
.icon-group { display: flex; flex-direction: column; align-items: center; height: 102px; flex: none; margin-top: 1px; padding: 6px 3px 0 0; background: #535353; color: #dedede; }
.icon-group.last { flex: 1; margin-top: 2px; }
.icon-group button { width: 44px; height: 36px; margin-top: 5px; }
.icon-group .pressed { background: #353535; border: 2px solid #656565; border-radius: 5px; }
.icon-group .char { gap: 3px; margin-top: 4px; font-size: 25px; }
.icon-group .char i { width: 1px; height: 26px; background: #dedede; }

.panels { display: flex; flex-direction: column; width: 428px; flex: none; padding-bottom: 1px; }
.panels .dock-head { margin-left: -1px; }
.gradients { display: flex; flex-direction: column; flex: none; margin-top: 1px; background: #535353; }
.tabs { display: flex; height: 42px; flex: none; background: #424242; color: #a0a0a0; font-size: 17px; border-bottom: 1px solid #383838; }
.tab { width: 60px; padding-bottom: 5px; border-right: 1px solid #383838; color: #a5a5a5; }
.tab.on { background: #535353; color: #f5f5f5; margin-bottom: -1px; }
.panel-menu { margin: 0 9px 0 auto; padding-top: 2px; color: #b5b5b5; }
.search { display: flex; align-items: center; gap: 5px; height: 33px; margin: 15px 13px 0 11px; }
.search input { flex: 1; min-width: 0; height: 33px; padding: 0 3px; border: 1px solid #666; background: #464646; outline: 0; }
.search input::placeholder { color: #7d7d7d; opacity: 1; }
.recent { height: 27px; margin: 12px 13px 12px 10px; background: #4b4b4b; }
.preset-area { display: flex; height: 279px; border-top: 1px solid #3d3d3d; border-bottom: 2px solid #3d3d3d; }
.preset-list { flex: 1; padding-top: 1px; background: #424242; border-bottom: 13px solid #696969; }
.preset-folder { height: 42px; gap: 9px; padding-left: 14px; font-size: 20px; color: #f5f5f5; }
.preset-folder svg + svg { margin-right: 4px; color: #dedede; }
.track { display: flex; flex-direction: column; align-items: center; width: 27px; flex: none; padding: 13px 0 10px; background: #4a4a4a; color: #a0a0a0; }
.track svg:last-child { margin-top: auto; }
.thumb { width: 18px; height: 117px; margin-top: 6px; border-radius: 2px; background: #696969; }
.thumb.short { height: 90px; }
.panel-foot { display: flex; align-items: center; justify-content: flex-end; height: 37px; flex: none; background: #535353; color: #dedede; }
.gradients .panel-foot { gap: 26px; padding-right: 45px; }
.properties { display: flex; flex-direction: column; flex: 1; min-height: 0; margin-top: 3px; background: #535353; }
.prop-title { height: 51px; flex: none; border-bottom: 2px solid #3d3d3d; }
.prop-area { display: flex; flex: 1; min-height: 0; margin-bottom: 39px; }
.prop-body { display: flex; flex: 1; align-items: flex-end; gap: 14px; padding: 0 87px 21px 57px; color: #c8c8c8; }
.prop-body label { padding-bottom: 4px; }
.prop-body .dropdown { flex: 1; height: 32px; color: #f0f0f0; }
.bottom-tabs { margin-top: 3px; flex: none; padding-bottom: 4px; background: #4a4a4a; }

.floating { position: absolute; display: flex; flex-direction: column; border: 1px solid #383838; background: #4d4d4d; box-shadow: 0 2px 8px #2228; }
.floating .resize { display: flex; justify-content: center; height: 12px; flex: none; padding-top: 2px; border-top: 2px solid #3b3b3b; background: #535353; }
.floating .panel-foot { border-top: 2px solid #3b3b3b; height: 38px; }
.side-track { width: 24px; flex: none; background: #484848; }

.layers { right: 112px; top: 203px; bottom: 134px; width: 382px; border-radius: 0 5px 0 0; color: #919191; }
.float-head { display: flex; align-items: center; justify-content: flex-end; gap: 14px; height: 18px; flex: none; padding-right: 7px; background: #424242; color: #d5d5d5; border-radius: 0 5px 0 0; }
.layers .tabs { padding-left: 4px; border-top: 1px solid #383838; }
.layers .tab { width: 54px; padding-bottom: 7px; }
.layers .panel-menu { margin-right: 7px; }
.layer-row { display: flex; align-items: center; height: 43px; flex: none; padding-left: 4px; background: #535353; border-bottom: 2px solid #3f3f3f; }
.layers .dropdown { background: #505050; border-color: #5d5d5d; color: #8a8a8a; }
.layers .dropdown svg:last-child { color: #707070; }
.filter-row { height: 51px; padding-top: 7px; }
.kind { width: 128px; padding-left: 11px; }
.kind select { padding: 0 0 0 4px; }
.filter-icons { display: flex; align-items: center; justify-content: space-between; width: 163px; margin-left: 25px; color: #a0a0a0; }
.toggle { width: 13px; height: 27px; margin-left: 25px; align-items: flex-start; border-radius: 7px; background: #4a4a4a; }
.toggle i { width: 12px; height: 12px; border-radius: 6px; background: #b0b0b0; }
.blend { width: 176px; }
.amount { display: flex; align-items: center; margin: 0 23px 0 auto; white-space: nowrap; }
.number { display: flex; align-items: center; width: 81px; height: 27px; margin-left: 7px; border: 1px solid #606060; border-radius: 3px; color: #777; }
.number input { width: 57px; height: 25px; padding: 0 3px; border: 0; border-right: 1px solid #606060; background: #4a4a4a; font-size: 17px; }
.number svg { margin: 4px auto 0; color: #707070; }
.lock-row { height: 47px; padding: 0 0 4px 8px; border: 0; }
.lock-icons { display: flex; align-items: center; justify-content: space-between; width: 149px; margin-left: 16px; color: #a5a5a5; }
.layer-list { display: flex; flex: 1; min-height: 0; }
.layer-items { flex: 1; }
.layer { display: flex; height: 82px; border-bottom: 1px solid #434343; }
.eye { width: 44px; padding-left: 2px; background: #535353; color: #e5e5e5; border-right: 1px solid #434343; }
.layer-main { display: flex; align-items: center; flex: 1; padding: 0 23px 0 6px; background: #6b6b6b; color: #f5f5f5; }
.layer-main svg { margin-left: auto; color: #e5e5e5; }
.thumbnail { flex: none; border: 1px solid #282828; background: #fff; }
.layer-main .thumbnail { width: 120px; height: 69px; margin-right: 15px; }
.layer-foot { padding-right: 30px; }
.layer-foot button { width: 41px; }
.dim { color: #8c8c8c; }
.fx { font-style: italic; }

.history { right: 490px; top: 14px; bottom: 182px; width: 377px; border-top: 7px solid #343434; }
.history .tabs { height: 41px; }
.history .tab.on { width: 93px; }
.tabs-end { display: flex; align-items: center; gap: 14px; margin: 0 7px 0 auto; color: #c8c8c8; }
.tabs-end i { width: 2px; height: 20px; background: #a0a0a0; }
.history-area { display: flex; flex: 1; min-height: 0; }
.history-area .side-track { margin-top: 8px; }
.history-list { flex: 1; }
.snapshot { display: flex; align-items: center; height: 46px; padding-left: 4px; background: #535353; border-bottom: 1px solid #6c6c6c; color: #d8d8d8; }
.snapshot svg { width: 26px; height: 26px; }
.snapshot .thumbnail { width: 48px; height: 26px; margin: 0 11px 0 7px; }
.state { display: flex; align-items: center; height: 35px; padding-left: 9px; background: #535353; border-bottom: 1px solid #404040; color: #e5e5e5; }
.state.current { background: #696969; border-color: #535353; }
.state input { appearance: none; width: 18px; height: 18px; margin-right: 21px; border: 1px solid #6c6c6c; border-top-color: #444; border-left-color: #444; }
.state svg { margin-right: 19px; }
.history-foot { gap: 27px; padding-right: 42px; }

.taskbar { display: flex; flex: none; height: 46px; background: #e9e4f2; color: #000; }
.start { width: 54px; }
.start.find { width: 57px; padding-right: 4px; }
.task { position: relative; width: 57px; }
.task .ps-logo { height: 20px; }
.task.focus { background: #fbfafd; }
.task::after { content: ""; position: absolute; left: 7px; right: 7px; bottom: 0; height: 3px; background: #0078d7; }
.task.focus::after { left: 0; right: 0; }
.task.more::after { background: linear-gradient(90deg, #0078d7 72%, #6bade3 72%); }
.tray { display: flex; align-items: center; gap: 13px; margin: 0 6px 0 auto; padding-right: 30px; border-right: 1px solid #b5b0c0; }
.tray time { margin: 0 16px 0 14px; }
.ime { margin-right: 6px; font-size: 22px; color: #fff; -webkit-text-stroke: 2px #666; paint-order: stroke fill; }
</style>
